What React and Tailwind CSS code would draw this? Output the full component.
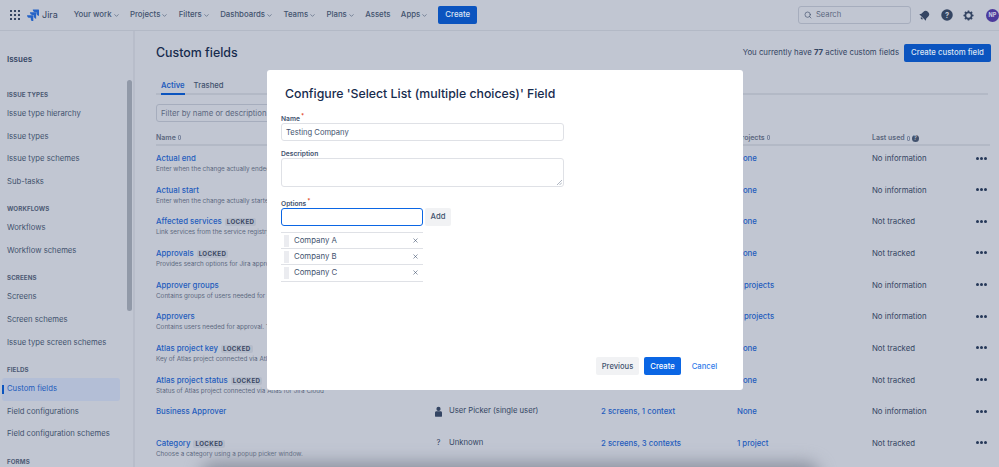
import { ChevronDown, Search, X } from "lucide-react";

const navItems = [
  ["Your work", true],
  ["Projects", true],
  ["Filters", true],
  ["Dashboards", true],
  ["Teams", true],
  ["Plans", true],
  ["Assets", false],
  ["Apps", true],
];

const sideGroups = [
  { title: "ISSUE TYPES", items: ["Issue type hierarchy", "Issue types", "Issue type schemes", "Sub-tasks"] },
  { title: "WORKFLOWS", items: ["Workflows", "Workflow schemes"] },
  { title: "SCREENS", items: ["Screens", "Screen schemes", "Issue type screen schemes"] },
  { title: "FIELDS", items: ["Custom fields", "Field configurations", "Field configuration schemes"] },
  { title: "FORMS", items: [] },
];

const rows = [
  { name: "Actual end", desc: "Enter when the change actually ended", projects: "None", used: "No information" },
  { name: "Actual start", desc: "Enter when the change actually started", projects: "None", used: "No information" },
  { name: "Affected services", locked: true, desc: "Link services from the service registry", projects: "None", used: "Not tracked" },
  { name: "Approvals", locked: true, desc: "Provides search options for Jira approvals", projects: "None", used: "Not tracked" },
  { name: "Approver groups", desc: "Contains groups of users needed for approval", projects: "2 projects", used: "No information" },
  { name: "Approvers", desc: "Contains users needed for approval. This", projects: "2 projects", used: "No information" },
  { name: "Atlas project key", locked: true, desc: "Key of Atlas project connected via Atlas", projects: "None", used: "Not tracked" },
  { name: "Atlas project status", locked: true, desc: "Status of Atlas project connected via Atlas for Jira Cloud", projects: "None", used: "Not tracked" },
  { name: "Business Approver", type: "User Picker (single user)", icon: "user", screens: "2 screens, 1 context", projects: "None", used: "No information" },
  { name: "Category", locked: true, desc: "Choose a category using a popup picker window.", type: "Unknown", icon: "unknown", screens: "2 screens, 3 contexts", projects: "1 project", used: "Not tracked" },
];

function JiraLogo() {
  return (
    <svg width="12" height="12" viewBox="0 0 24 24" fill="#2563c7">
      <path d="M23 1H11.5c0 3 2.4 5.3 5.3 5.3h2.1v2c0 2.9 2.4 5.3 5.1 5.4V2c0-.6-.4-1-1-1z" />
      <path d="M17.3 6.7H5.8c0 3 2.4 5.3 5.3 5.3h2.1v2.1c0 2.9 2.4 5.3 5.1 5.3V7.7c0-.6-.4-1-1-1z" />
      <path d="M11.6 12.4H0c0 3 2.4 5.3 5.3 5.3h2.2v2.1c0 2.9 2.3 5.2 5.1 5.2V13.4c0-.6-.4-1-1-1z" />
    </svg>
  );
}

function SortMark() {
  return <span className="inline-block w-[3px] h-[5px] ml-[2px] border border-[#7c87a0] rounded-[1px]" />;
}

function Dots() {
  return (
    <div className="flex gap-[1px] justify-end pr-[3px]">
      <span className="w-[3px] h-[3px] rounded-full bg-[#253858]" />
      <span className="w-[3px] h-[3px] rounded-full bg-[#253858]" />
      <span className="w-[3px] h-[3px] rounded-full bg-[#253858]" />
    </div>
  );
}

function FieldRow({ row }) {
  return (
    <div className="grid grid-cols-[275px_170px_136px_135px_1fr_24px] h-[31.67px] pt-[7px]">
      <div className="min-w-0 whitespace-nowrap">
        <div className="flex items-center h-[12px]">
          <span className="text-[7.8px] font-medium text-[#1f5cbd]">{row.name}</span>
          {row.locked && (
            <span className="ml-[3px] px-[2px] rounded-[2px] bg-[#b4bbc9] text-[6.2px] leading-[8px] font-bold tracking-[0.4px] text-[#3a4763]">LOCKED</span>
          )}
        </div>
        {row.desc && <div className="text-[6.3px] leading-[8px] text-[#5c6880]">{row.desc}</div>}
      </div>
      <div className="flex items-start h-[12px] text-[7.7px] leading-[10px] text-[#344563]">
        {row.icon === "user" && (
          <svg className="w-[7px] h-[11px] mr-[7px] ml-[4px] shrink-0" viewBox="0 0 8 12" fill="#344563">
            <circle cx="4" cy="3" r="2.4" />
            <path d="M0 7.5C0 6.3 1 5.8 2 5.8h4c1 0 2 .5 2 1.7V11c0 .6-.4 1-1 1H1c-.6 0-1-.4-1-1z" />
          </svg>
        )}
        {row.icon === "unknown" && <span className="w-[7px] mr-[7px] ml-[4px] text-center shrink-0">?</span>}
        {row.type}
      </div>
      <div className="h-[12px] text-[7.8px] leading-[10px] font-medium text-[#1f5cbd]">{row.screens}</div>
      <div className="h-[12px] text-[7.8px] leading-[10px] font-medium text-[#1f5cbd]">{row.projects}</div>
      <div className="h-[12px] text-[7.8px] leading-[10px] text-[#344563]">{row.used}</div>
      <div className="h-[10px] flex items-center justify-end"><Dots /></div>
    </div>
  );
}

function OptionRow({ label }) {
  return (
    <div className="flex items-center h-[16.2px] border-b border-[#dfe1e6] pl-[3px] pr-[4px]">
      <span className="w-[5px] h-[12px] bg-[#ebecf0] mr-[5px]" />
      <span className="flex-1 text-[7.8px] text-[#42526e]">{label}</span>
      <X size={7} strokeWidth={2} className="text-[#42526e]" />
    </div>
  );
}

function Label({ children, required }) {
  return (
    <div className="h-[9px] text-[6.7px] leading-[11px] font-semibold text-[#42526e]">
      {children}
      {required && <sup className="text-[#de350b] text-[6px] ml-px">*</sup>}
    </div>
  );
}

export default function App() {
  return (
    <div className="relative h-[467px] w-[999px] overflow-hidden bg-[#c1c6d2] font-['Inter',sans-serif] text-[#344563]">
      {/* Top nav */}
      <header className="flex items-center h-[31px] border-b border-[#b3b9c6] pl-[10px]">
        <div className="grid grid-cols-3 gap-[2px] w-[10px] mr-[7px]">
          {Array.from({ length: 9 }).map((_, i) => (
            <span key={i} className="w-[2px] h-[2px] bg-[#344563]" />
          ))}
        </div>
        <JiraLogo />
        <span className="ml-[3px] mr-[16px] text-[9px] text-[#344563]">Jira</span>
        <nav className="flex items-center gap-[10.4px]">
          {navItems.map(([label, chevron]) => (
            <span key={label} className="flex items-center text-[7.8px] font-medium text-[#42526e] whitespace-nowrap">
              {label}
              {chevron && <ChevronDown size={7} strokeWidth={2} className="ml-px" />}
            </span>
          ))}
        </nav>
        <button className="ml-[10px] w-[39px] h-[18px] rounded-[2px] bg-[#0b54bf] text-[7.8px] font-medium text-[#dbe4f3]">Create</button>
        <div className="flex-1" />
        <div className="flex items-center w-[113px] h-[18px] border border-[#a6adbd] rounded-[3px] pl-[5px]">
          <Search size={8} strokeWidth={2} className="text-[#42526e]" />
          <span className="ml-[4px] text-[7.6px] text-[#5c6880]">Search</span>
        </div>
        <svg className="ml-[8px]" width="11" height="11" viewBox="0 0 24 24" fill="#344563">
          <g transform="rotate(45 12 12)">
            <path d="M12 1a7.5 7.5 0 0 0-7.5 7.5V14L2 18h20l-2.500-4V8.500A7.500 7.500 0 0 0 12 1z" />
            <path d="M9 19.500a3 3 0 0 0 6 0z" />
          </g>
        </svg>
        <svg className="ml-[11px]" width="12" height="12" viewBox="0 0 24 24">
          <circle cx="12" cy="12" r="11.5" fill="#344563" />
          <text x="12" y="17.5" textAnchor="middle" fontSize="15" fontWeight="700" fill="#c1c6d2">?</text>
        </svg>
        <svg className="ml-[10px]" width="11" height="11" viewBox="0 0 24 24" fill="none" stroke="#344563" strokeWidth="4">
          <circle cx="12" cy="12" r="7" />
          <path d="M12 1v4M12 19v4M1 12h4M19 12h4M4.200 4.200l2.800 2.800M17 17l2.800 2.800M4.200 19.800L7 17M17 7l2.800-2.800" strokeWidth="3.400" />
        </svg>
        <span className="ml-[12px] flex items-center justify-center w-[13px] h-[13px] rounded-full bg-[#4c3a9c] text-[5.5px] font-bold text-[#c9cde0]">NP</span>
      </header>

      <div className="flex h-[436px]">
        {/* Sidebar */}
        <aside className="relative w-[135px] shrink-0 border-r-2 border-[#b8bdca] pl-[2px] overflow-hidden">
          <div className="w-[118px] pt-[22px]">
            <div className="pl-[5px] text-[8px] font-semibold text-[#344563] h-[12px] leading-[12px]">Issues</div>
            <div className="mt-[23px]">
              {sideGroups.map((g) => (
                <div key={g.title} className="mb-[8.6px]">
                  <div className="pl-[5px] h-[14px] leading-[14px] text-[6.2px] font-bold tracking-[0.1px] text-[#4d5a74]">{g.title}</div>
                  <div className="mt-[1px]">
                    {g.items.map((item) => {
                      const active = item === "Custom fields";
                      return (
                        <div
                          key={item}
                          className={`relative h-[22.7px] leading-[22.7px] pl-[5px] rounded-[3px] text-[7.7px] whitespace-nowrap ${active ? "bg-[#b3bed6] text-[#1f5cbd]" : "text-[#42526e]"}`}
                        >
                          {active && <span className="absolute left-0 top-[7px] w-[2px] h-[9px] bg-[#0b54bf]" />}
                          {item}
                        </div>
                      );
                    })}
                  </div>
                </div>
              ))}
            </div>
          </div>
          <div className="absolute left-[127px] top-[49px] w-[5px] h-[231px] rounded-full bg-[#9199a8]" />
        </aside>

        {/* Main */}
        <main className="flex-1 min-w-0 pl-[21px] pr-[9px]">
          <div className="flex items-center justify-between h-[46px] pb-[2px]">
            <h1 className="text-[12.4px] font-medium text-[#172b4d]">Custom fields</h1>
            <div className="flex items-center mr-[-1px]">
              <span className="text-[7.8px] text-[#344563]">You currently have <b>77</b> active custom fields</span>
              <button className="ml-[5px] w-[87px] h-[18px] rounded-[2px] bg-[#0b54bf] text-[7.8px] font-medium text-[#dbe4f3]">Create custom field</button>
            </div>
          </div>
          <div className="flex items-end gap-[9px] h-[18px] border-b-2 border-[#b3b9c6] pl-[5px] mr-[2px]">
            <span className="h-[17px] leading-[15px] border-b-2 border-[#0b54bf] mb-[-2px] text-[7.7px] font-semibold text-[#1f5cbd]">Active</span>
            <span className="h-[17px] leading-[15px] mb-[-2px] text-[7.7px] font-medium text-[#42526e]">Trashed</span>
          </div>
          <div className="mt-[9px] w-[180px] h-[18px] border border-[#a6adbd] rounded-[3px] pl-[4px] text-[7.8px] leading-[16px] text-[#5c6880] whitespace-nowrap overflow-hidden">
            Filter by name or description
          </div>
          <div className="grid grid-cols-[275px_170px_136px_135px_1fr_24px] items-center h-[15px] pt-[2px] mt-[9px] border-b-2 border-[#b3b9c6] text-[7px] font-semibold text-[#5c6880]">
            <span>Name<SortMark /></span>
            <span />
            <span />
            <span>Projects<SortMark /></span>
            <span className="flex items-center">
              Last used<SortMark />
              <span className="ml-[2px] flex items-center justify-center w-[7px] h-[7px] rounded-full bg-[#42526e] text-[5.5px] text-[#c1c6d2]">?</span>
            </span>
            <span />
          </div>
          <div>
            {rows.map((r) => (
              <FieldRow key={r.name} row={r} />
            ))}
          </div>
        </main>
      </div>

      <div className="absolute left-[200px] top-[462px] w-[620px] h-[30px] rounded-full bg-[#8d93a1] blur-[8px]" />

      {/* Modal */}
      <div className="absolute left-[267px] top-[70px] w-[476px] h-[320px] flex flex-col rounded-[3px] bg-white px-[14px] pt-[14px] pb-[15px]">
        <h2 className="pl-[4px] pt-[1px] h-[18px] text-[12.3px] leading-[18px] font-medium text-[#172b4d] whitespace-nowrap">Configure 'Select List (multiple choices)' Field</h2>
        <div className="mt-[12px]"><Label required>Name</Label></div>
        <div className="w-[283px] h-[18px] border border-[#dfe1e6] rounded-[3px] pl-[4px] pt-[1px] text-[7.6px] leading-[16px] text-[#42526e]">Testing Company</div>
        <div className="mt-[8px]"><Label>Description</Label></div>
        <div className="relative w-[283px] h-[29px] border border-[#dfe1e6] rounded-[3px]">
          <svg className="absolute right-[1px] bottom-[1px]" width="5" height="5" viewBox="0 0 5 5" stroke="#7a869a" strokeWidth="0.6">
            <path d="M0 5L5 0M2.5 5L5 2.5" />
          </svg>
        </div>
        <div className="mt-[12px]"><Label required>Options</Label></div>
        <div className="flex gap-[2px]">
          <div className="w-[142px] h-[18px] border-[1.5px] border-[#0b66e4] rounded-[3px]" />
          <button className="w-[26px] h-[18px] rounded-[2px] bg-[#f1f2f4] text-[7.7px] font-medium text-[#42526e]">Add</button>
        </div>
        <div className="mt-[6px] w-[142px] border-t border-[#dfe1e6]">
          <OptionRow label="Company A" />
          <OptionRow label="Company B" />
          <OptionRow label="Company C" />
        </div>
        <div className="mt-auto flex items-center justify-end gap-[5px] pr-[6px]">
          <button className="w-[43px] h-[18px] pt-[1px] rounded-[2px] bg-[#f1f2f4] text-[7.6px] font-medium text-[#42526e]">Previous</button>
          <button className="w-[37px] h-[18px] pt-[1px] rounded-[2px] bg-[#0b66e4] text-[7.7px] font-medium text-white">Create</button>
          <button className="w-[37px] h-[18px] pt-[1px] text-[7.7px] font-medium text-[#2f7bea]">Cancel</button>
        </div>
      </div>
    </div>
  );
}
